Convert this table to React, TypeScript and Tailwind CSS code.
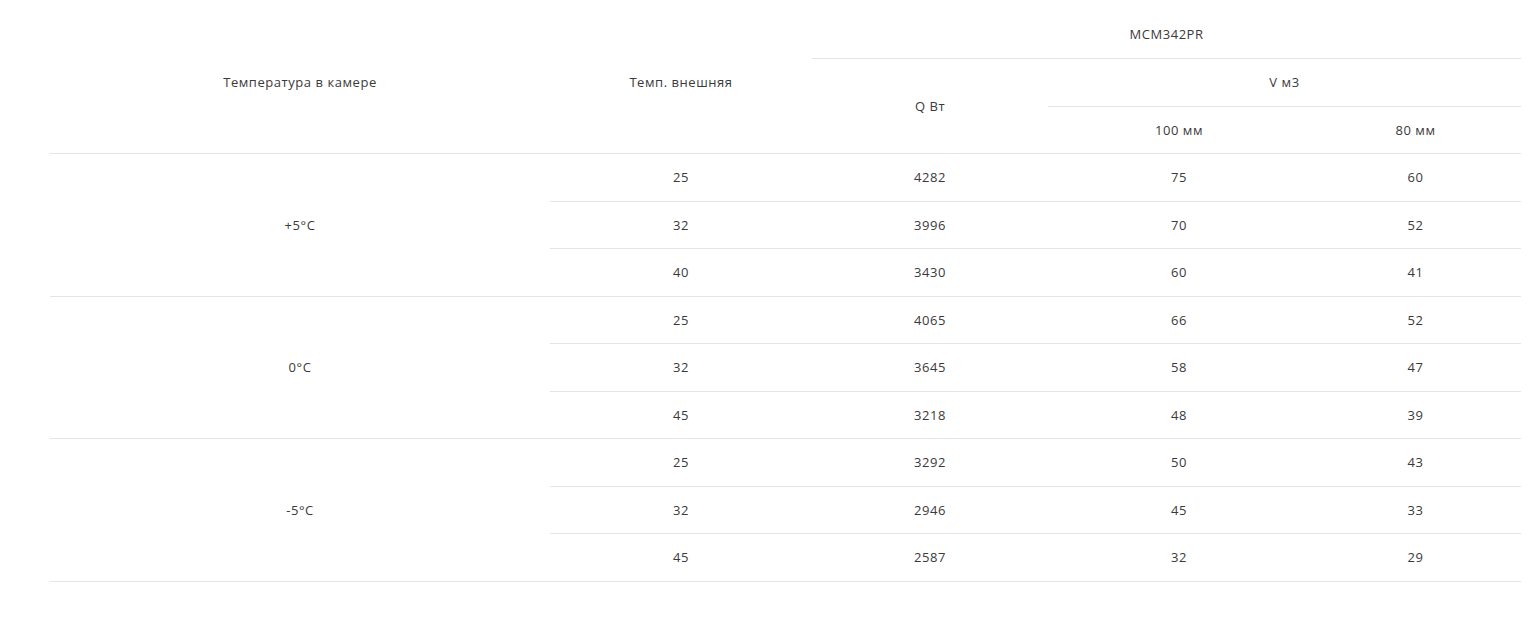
import React from "react";

const groups = [
  {
    label: "+5°C",
    rows: [
      ["25", "4282", "75", "60"],
      ["32", "3996", "70", "52"],
      ["40", "3430", "60", "41"],
    ],
  },
  {
    label: "0°C",
    rows: [
      ["25", "4065", "66", "52"],
      ["32", "3645", "58", "47"],
      ["45", "3218", "48", "39"],
    ],
  },
  {
    label: "-5°C",
    rows: [
      ["25", "3292", "50", "43"],
      ["32", "2946", "45", "33"],
      ["45", "2587", "32", "29"],
    ],
  },
];

const cell = "h-[47.5px] p-0 pt-[1px] text-center align-middle font-normal border-b border-[#e5e5e5]";

const App: React.FC = () => {
  return (
    <div className="min-h-screen bg-white pl-[50px] pr-[12px] pt-[11px] text-[13px] tracking-[0.55px] text-[#3a3a3a] [font-family:'Open_Sans',sans-serif]">
      <table className="w-[1471px] table-fixed border-collapse">
        <colgroup>
          <col className="w-[500px]" />
          <col className="w-[262px]" />
          <col className="w-[236px]" />
          <col className="w-[262px]" />
          <col className="w-[211px]" />
        </colgroup>
        <thead>
          <tr>
            <th rowSpan={3} className={cell}>
              Температура в камере
            </th>
            <th rowSpan={3} className={cell}>
              Темп. внешняя
            </th>
            <th colSpan={3} className={cell}>
              MCM342PR
            </th>
          </tr>
          <tr>
            <th rowSpan={2} className={cell}>
              Q Вт
            </th>
            <th colSpan={2} className={cell}>
              V м3
            </th>
          </tr>
          <tr>
            <th className={cell}>100 мм</th>
            <th className={cell}>80 мм</th>
          </tr>
        </thead>
        <tbody>
          {groups.map((g) =>
            g.rows.map((r, i) => (
              <tr key={g.label + i}>
                {i === 0 && (
                  <td rowSpan={3} className={cell}>
                    {g.label}
                  </td>
                )}
                {r.map((v, j) => (
                  <td key={j} className={cell}>
                    {v}
                  </td>
                ))}
              </tr>
            ))
          )}
        </tbody>
      </table>
    </div>
  );
};

export default App;
